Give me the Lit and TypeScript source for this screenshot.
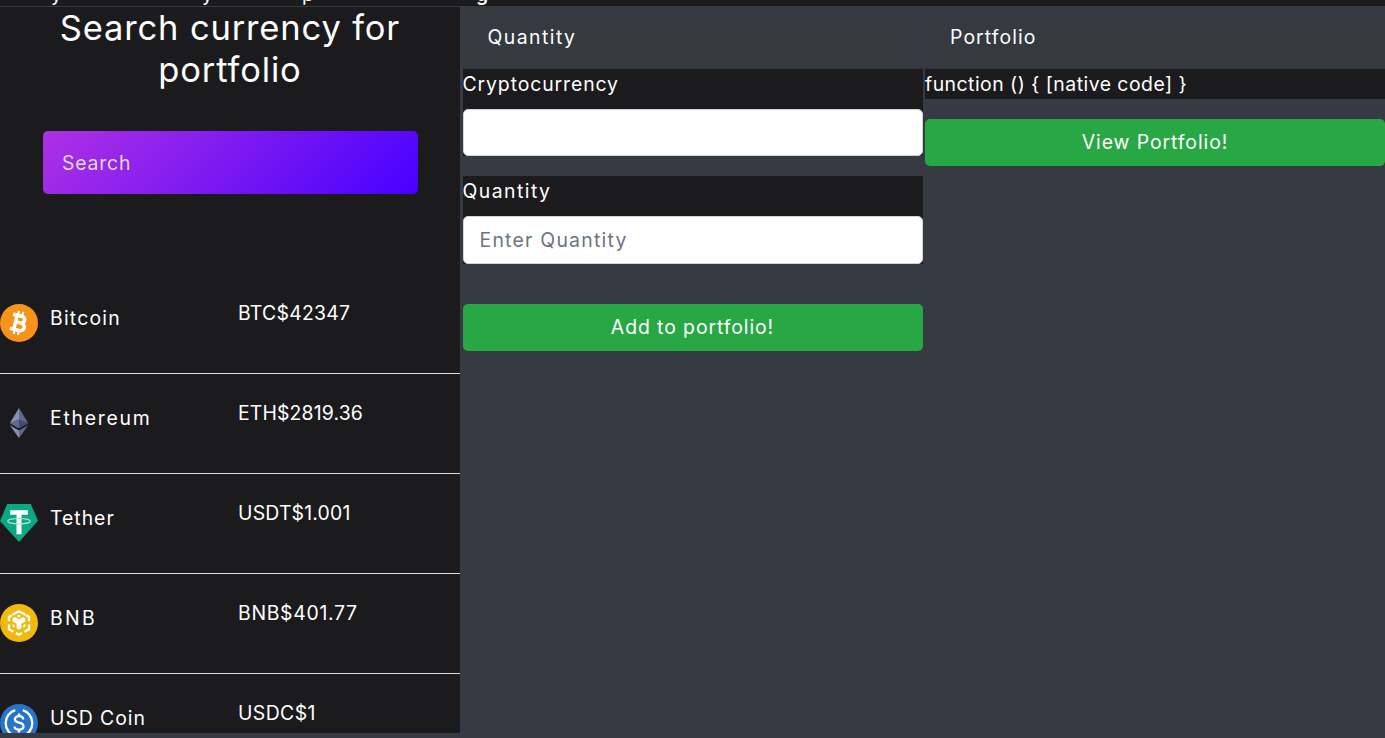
import { LitElement, html, css, svg } from "lit";
import { customElement } from "lit/decorators.js";
import { styleMap } from "lit/directives/style-map.js";

const bitcoin = svg`<circle cx="19" cy="19" r="19" fill="#f7931a"/>
  <g transform="rotate(13 19 19)" fill="none" stroke="#fff">
    <path stroke-width="3.5" d="M15.4 11v16M11.2 11.8h9c5 0 5 6.8 0 6.8h-4.5M20.5 18.8c6.2 0 6.2 7.5 0 7.5h-9.3"/>
    <path stroke-width="2.1" d="M16.3 7.2v4M20.6 7.2v4M16.3 26.5v4.3M20.6 26.5v4.3"/>
  </g>`;
const ethereum = svg`<path fill="#8a92b2" d="M19 4 9.8 19.3 19 16z"/><path fill="#62688f" d="M19 4v12l9.2 3.3z"/>
  <path fill="#62688f" d="M9.8 19.3 19 15.2v9.4z"/><path fill="#454a75" d="M19 15.2l9.2 4.1-9.2 5.3z"/>
  <path fill="#8a92b2" d="M9.8 21.2 19 26.6V34z"/><path fill="#62688f" d="M28.2 21.2 19 26.6V34z"/>`;
const tether = svg`<path fill="#0aa883" d="M7.2 0h23.6L38 16.8 19 38 0 17z"/>
  <path fill="#fff" d="M10.2 6.2h17.6v4.5h-6.3v19.6h-5V10.7h-6.3z"/>
  <ellipse cx="19" cy="17.2" rx="11.3" ry="2.7" fill="none" stroke="#b5e5d9" stroke-width="1.1"/>`;
const bnb = svg`<circle cx="19" cy="19" r="19" fill="#f0b90b"/>
  <g fill="none" stroke="#fff" stroke-width="2.4" stroke-linejoin="round">
    <path d="M12.5 10.8 19 7.2l6.5 3.6M9 17.2v-4.3l3-1.7M29 17.2v-4.3l-3-1.7M9 20.6v4.6l4.5 2.6M29 20.6v4.6l-4.5 2.6M16 29l3 1.7 3-1.7"/>
  </g>
  <path fill="#fff" d="m12.6 14.5 2.5-1.4 3.9 2.2 3.9-2.2 2.5 1.4v3l-4 2.3v4.5L19 25.7l-2.4-1.4v-4.5l-4-2.3zM19 10.7l2.4 1.4-2.4 1.4-2.4-1.4zM12.6 20l2.2 1.3v2.5l-2.2-1.3zM25.4 20l-2.2 1.3v2.5l2.2-1.3z"/>`;
const usdc = svg`<circle cx="19" cy="19" r="19" fill="#2775ca"/>
  <g fill="none" stroke="#fff" stroke-width="2.3">
    <path d="M15.2 6.1a13.5 13.5 0 0 0 0 25.8M22.8 6.1a13.5 13.5 0 0 1 0 25.8"/>
    <path d="M23.2 15.6c0-4.6-8.4-4.4-8.4-.3 0 4.6 8.7 2.2 8.7 7 0 4.4-9 4.6-9 .1M19 9.6v2.8M19 25.5v3"/>
  </g>`;

const coins = [
  { name: "Bitcoin", price: "BTC$42347", icon: bitcoin, n: 1.2, p: 0.25 },
  { name: "Ethereum", price: "ETH$2819.36", icon: ethereum, n: 1.75, p: 0.15 },
  { name: "Tether", price: "USDT$1.001", icon: tether, n: 1, p: 0.2 },
  { name: "BNB", price: "BNB$401.77", icon: bnb, n: 2.4, p: 0.7 },
  { name: "USD Coin", price: "USDC$1", icon: usdc, n: 0.95, p: 0.4 },
];

@customElement("app-root")
export class AppRoot extends LitElement {
  static styles = css`
    :host { display: block; height: 738px; overflow: hidden; background: #363a42; color: #fff;
      font: 400 19.4px/30px Inter, "Open Sans", sans-serif; }
    * { box-sizing: border-box; }
    .strip { height: 6px; background: #1b1b1d; overflow: hidden; display: flex; align-items: flex-end; }
    .strip p { margin: 0 0 -1px; padding-left: 51px; display: flex; line-height: 26px; }
    .a { width: 151px; } .b { width: 100px; } .c { width: 174px; }
    .d { font-weight: 600; }
    .page { display: grid; grid-template-columns: 460px 460px 460px; column-gap: 2.5px; height: 732px; }
    .left { margin-top: 1px; height: 726px; background: #1b1b1d; overflow: hidden; }
    h2 { margin: 0; font-weight: 400; font-size: 34.5px; line-height: 42px; text-align: center; letter-spacing: .85px; }
    .search { display: block; width: 375px; height: 63px; margin: 40px 0 80px 43px; padding: 0 19px; border: 0;
      border-radius: 5px; font: inherit; color: #fff; letter-spacing: .8px;
      background: linear-gradient(135deg, #ae31e4, #4700ff); }
    .search::placeholder { color: #dcdcdc; opacity: 1; }
    .row { height: 100px; border-bottom: 1px solid #dcdcdc; display: grid; grid-template-columns: 50px 188px 1fr; }
    .row svg { width: 38px; height: 38px; margin-top: 30px; }
    .name { margin-top: 29px; }
    .price { margin-top: 24px; }
    .head { height: 63px; padding: 16px 25px; background: #343a40; border-bottom: 1px solid #2f3437; letter-spacing: 1.1px; }
    .quantity { letter-spacing: 1.45px; }
    .label { background: #1b1b1d; height: 40px; }
    .crypto { letter-spacing: .9px; }
    .field { display: block; width: 100%; height: 47px; border: 1px solid #ced4da; border-radius: 5px;
      padding: 0 16px; font: inherit; background: #fff; letter-spacing: 1.25px; }
    .field::placeholder { color: #6c757d; opacity: 1; }
    .wrap { background: #1b1b1d; margin-bottom: 20px; }
    .wrap.last { margin-bottom: 40px; }
    .tall { height: 48px; }
    .out { background: #1b1b1d; height: 30px; margin-bottom: 20px; letter-spacing: .48px; }
    button { display: block; width: 100%; height: 47px; border: 0; border-radius: 5px; background: #28a745; color: #fff;
      font: inherit; letter-spacing: .92px; padding: 0 0 2px; }
  `;
  render() {
    return html`
      <div class="strip"><p><span class="a">y</span><span class="b">y</span><span class="c">p</span><span class="d">g</span></p></div>
      <div class="page">
        <section class="left">
          <h2>Search currency for<br>portfolio</h2>
          <input class="search" placeholder="Search">
          ${coins.map((c) => html`<div class="row">
            <svg viewBox="0 0 38 38">${c.icon}</svg>
            <span class="name" style=${styleMap({ letterSpacing: c.n + "px" })}>${c.name}</span>
            <span class="price" style=${styleMap({ letterSpacing: c.p + "px" })}>${c.price}</span>
          </div>`)}
        </section>
        <section>
          <div class="head quantity">Quantity</div>
          <div class="wrap"><div class="label crypto">Cryptocurrency</div><input class="field"></div>
          <div class="wrap last"><div class="label quantity">Quantity</div><input class="field tall" placeholder="Enter Quantity"></div>
          <button>Add to portfolio!</button>
        </section>
        <section>
          <div class="head">Portfolio</div>
          <div class="out">function () { [native code] }</div>
          <button>View Portfolio!</button>
        </section>
      </div>`;
  }
}
